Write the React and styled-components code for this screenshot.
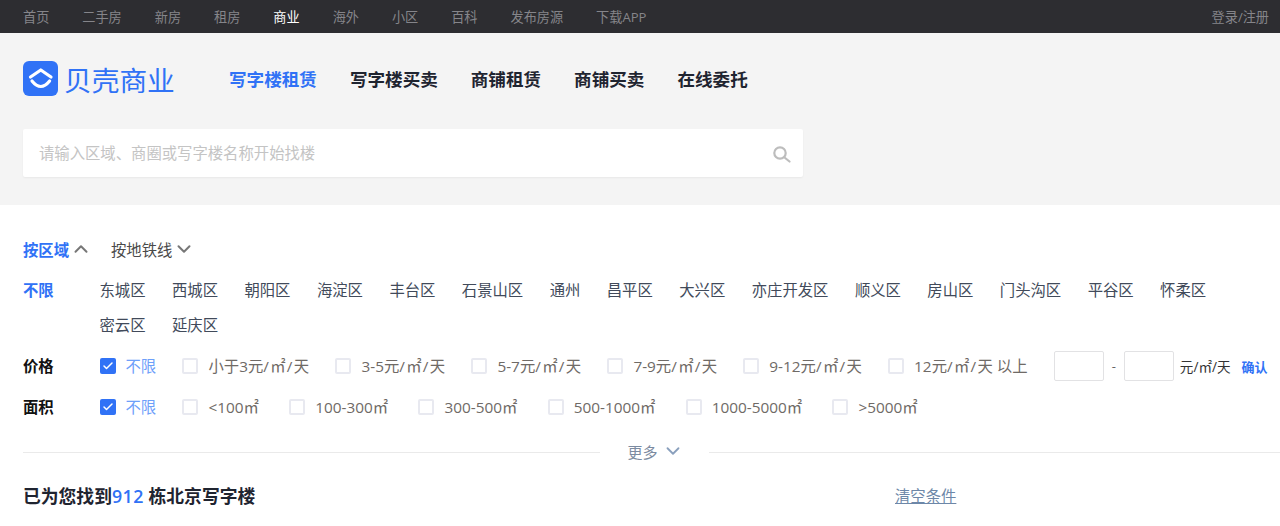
import React from 'react';
import styled, { createGlobalStyle } from 'styled-components';
import { ChevronUp, ChevronDown, Check } from 'lucide-react';

const BLUE = '#3072f6';
const FONT = '"Open Sans", "Noto Sans CJK SC", sans-serif';

const topLinks = ['首页', '二手房', '新房', '租房', '商业', '海外', '小区', '百科', '发布房源', '下载APP'];
const mainLinks = ['写字楼租赁', '写字楼买卖', '商铺租赁', '商铺买卖', '在线委托'];
const districts = [
  '东城区', '西城区', '朝阳区', '海淀区', '丰台区', '石景山区', '通州', '昌平区', '大兴区',
  '亦庄开发区', '顺义区', '房山区', '门头沟区', '平谷区', '怀柔区', '密云区', '延庆区',
];
const prices = ['小于3元', '3-5元', '5-7元', '7-9元', '9-12元', '12元'];
const areas = ['<100㎡', '100-300㎡', '300-500㎡', '500-1000㎡', '1000-5000㎡', '>5000㎡'];

const Global = createGlobalStyle`
  html, body {
    margin: 0;
    padding: 0;
    background: #fff;
    font-family: ${FONT};
    overflow: hidden;
  }
`;

const Page = styled.div`
  width: 1280px;
  height: 526px;
  overflow: hidden;
`;

const TopBar = styled.div`
  height: 33px;
  background: #2d2d31;
  display: flex;
  align-items: center;
  justify-content: space-between;
  padding: 0 11px 0 23px;
  font-size: 13.15px;
`;

const TopNav = styled.div`
  display: flex;
  gap: 33px;
`;

const TopLink = styled.a`
  color: ${(props) => (props.$active ? '#fff' : '#85858a')};
`;

const Header = styled.div`
  height: 172px;
  background: #f4f4f4;
  padding: 28px 0 0 23px;
  box-sizing: border-box;
`;

const BrandRow = styled.div`
  display: flex;
  align-items: center;
  height: 35px;
`;

const Brand = styled.div`
  display: flex;
  align-items: center;
  width: 206px;
  gap: 6px;
`;

const BrandName = styled.span`
  color: ${BLUE};
  font-size: 27.7px;
  font-family: "Noto Sans CJK SC", sans-serif;
  font-weight: 400;
  white-space: nowrap;
`;

const MainNav = styled.div`
  display: flex;
  gap: 33px;
  font-size: 17.58px;
  font-weight: 700;
  line-height: 40px;
`;

const MainLink = styled.a`
  color: ${(props) => (props.$active ? BLUE : '#1f2430')};
`;

const SearchBox = styled.div`
  margin-top: 33px;
  width: 780px;
  height: 48px;
  background: #fff;
  border-radius: 2px;
  box-shadow: 0 1px 2px rgba(0, 0, 0, 0.05);
  display: flex;
  align-items: center;
  justify-content: space-between;
  padding: 0 11px 0 16px;
  box-sizing: border-box;
`;

const Placeholder = styled.span`
  color: #c4c4c4;
  font-size: 15.35px;
  line-height: 46px;
`;

const Filters = styled.div`
  padding: 33px 0 0 23px;
`;

const Tabs = styled.div`
  display: flex;
  align-items: center;
  height: 22px;
  font-size: 15.35px;
`;

const Tab = styled.span`
  display: flex;
  align-items: center;
  gap: 1px;
  margin-right: 19px;
  color: ${(props) => (props.$active ? BLUE : '#4a4a4a')};
  font-weight: ${(props) => (props.$active ? 700 : 400)};
  svg {
    color: #777;
  }
`;

const Row = styled.div`
  display: flex;
  align-items: ${(props) => props.$align || 'center'};
  margin-top: ${(props) => props.$mt}px;
`;

const RowLabel = styled.span`
  width: 76.5px;
  flex: none;
  font-size: 15.35px;
  font-weight: 700;
  line-height: 22px;
  color: ${(props) => (props.$active ? BLUE : '#111')};
`;

const DistrictList = styled.div`
  display: flex;
  flex-wrap: wrap;
  column-gap: 26.45px;
  row-gap: 13px;
  width: 1150px;
  font-size: 15.35px;
  line-height: 22px;
  color: #414a5a;
`;

const Option = styled.label`
  display: flex;
  align-items: center;
  margin-right: ${(props) => props.$gap || 26.3}px;
  font-size: 15.35px;
  line-height: 22px;
  white-space: nowrap;
  color: ${(props) => (props.$checked ? '#6ea0fa' : '#6f6a66')};
`;

const Box = styled.span`
  width: 16px;
  height: 16px;
  margin-right: 10px;
  border-radius: 2px;
  box-sizing: border-box;
  border: ${(props) => (props.$checked ? 'none' : '2px solid #e8e9f0')};
  background: ${(props) => (props.$checked ? BLUE : '#fff')};
  display: inline-flex;
  align-items: center;
  justify-content: center;
  color: #fff;
`;

const PerUnit = styled.span`
  letter-spacing: 1.3px;
`;

const Suffix = styled.span`
  margin-left: 4px;
`;

const RangeInput = styled.span`
  width: 50px;
  height: 30px;
  box-sizing: border-box;
  border: 1px solid #e2e2e4;
  border-radius: 2px;
`;

const Dash = styled.span`
  width: 20px;
  text-align: center;
  color: #666;
  font-size: 13px;
`;

const Unit = styled.span`
  margin-left: 6px;
  font-size: 13.6px;
  color: #333;
`;

const Confirm = styled.a`
  margin-left: 11px;
  font-size: 13px;
  font-weight: 700;
  color: ${BLUE};
`;

const More = styled.div`
  display: flex;
  align-items: center;
  margin: 23px 0 0 23px;
  height: 22px;
  &::before {
    content: '';
    height: 1px;
    background: #eaeaea;
    width: 577px;
  }
  &::after {
    content: '';
    height: 1px;
    background: #eaeaea;
    flex: 1;
  }
`;

const MoreLabel = styled.span`
  display: flex;
  align-items: center;
  justify-content: center;
  width: 109px;
  box-sizing: border-box;
  padding: 0 0 2px 2px;
  gap: 4px;
  color: #7c8ba1;
  font-size: 15px;
  svg {
    color: #8aa0bd;
  }
`;

const Results = styled.div`
  display: flex;
  align-items: center;
  margin: 21px 0 0 23px;
  height: 22px;
`;

const ResultText = styled.span`
  width: 872px;
  font-size: 17.8px;
  font-weight: 700;
  color: #1f2430;
  b {
    color: ${BLUE};
    font-weight: 600;
    letter-spacing: 0.5px;
  }
`;

const Clear = styled.a`
  font-size: 15.35px;
  color: #6d87a8;
  text-decoration: underline;
`;

const Logo = () => (
  <svg width="35" height="35" viewBox="0 0 35 35">
    <rect width="35" height="35" rx="6" fill={BLUE} />
    <path d="M7.5 16 L17.8 9 L28 16" fill="none" stroke="#fff" strokeWidth="3.2" strokeLinecap="round" strokeLinejoin="round" />
    <path d="M9 20 Q17.8 31 26.6 20" fill="none" stroke="#fff" strokeWidth="3.2" strokeLinecap="round" />
  </svg>
);

const SearchIcon = () => (
  <svg width="20" height="20" viewBox="0 0 20 20" fill="none" stroke="#bdbdbd" strokeWidth="2.2" strokeLinecap="round">
    <circle cx="8" cy="10" r="5.7" />
    <path d="M12.5 14.5 L17.5 18.5" />
  </svg>
);

const CheckOption = ({ checked, gap, children }) => (
  <Option $checked={checked} $gap={gap}>
    <Box $checked={checked}>{checked && <Check size={12} strokeWidth={3} />}</Box>
    {children}
  </Option>
);

export default function App() {
  return (
    <Page>
      <Global />
      <TopBar>
        <TopNav>
          {topLinks.map((t) => (
            <TopLink key={t} $active={t === '商业'}>{t}</TopLink>
          ))}
        </TopNav>
        <TopLink>登录/注册</TopLink>
      </TopBar>

      <Header>
        <BrandRow>
          <Brand>
            <Logo />
            <BrandName>贝壳商业</BrandName>
          </Brand>
          <MainNav>
            {mainLinks.map((t, i) => (
              <MainLink key={t} $active={i === 0}>{t}</MainLink>
            ))}
          </MainNav>
        </BrandRow>
        <SearchBox>
          <Placeholder>请输入区域、商圈或写字楼名称开始找楼</Placeholder>
          <SearchIcon />
        </SearchBox>
      </Header>

      <Filters>
        <Tabs>
          <Tab $active>按区域 <ChevronUp size={22} strokeWidth={2.2} /></Tab>
          <Tab>按地铁线 <ChevronDown size={22} strokeWidth={2.2} /></Tab>
        </Tabs>
        <Row $align="flex-start" $mt={19}>
          <RowLabel $active>不限</RowLabel>
          <DistrictList>
            {districts.map((d) => <span key={d}>{d}</span>)}
          </DistrictList>
        </Row>
        <Row $mt={15}>
          <RowLabel>价格</RowLabel>
          <CheckOption checked>不限</CheckOption>
          {prices.map((p, i) => (
            <CheckOption key={p}>
              <span>{p}<PerUnit>/㎡/</PerUnit>天{i === prices.length - 1 && <Suffix>以上</Suffix>}</span>
            </CheckOption>
          ))}
          <RangeInput />
          <Dash>-</Dash>
          <RangeInput />
          <Unit>元/㎡/天</Unit>
          <Confirm>确认</Confirm>
        </Row>
        <Row $mt={15}>
          <RowLabel>面积</RowLabel>
          <CheckOption checked>不限</CheckOption>
          {areas.map((a) => <CheckOption key={a} gap={30.3}>{a}</CheckOption>)}
        </Row>
      </Filters>

      <More>
        <MoreLabel>更多 <ChevronDown size={22} strokeWidth={2} /></MoreLabel>
      </More>

      <Results>
        <ResultText>已为您找到<b>912</b> 栋北京写字楼</ResultText>
        <Clear>清空条件</Clear>
      </Results>
    </Page>
  );
}
